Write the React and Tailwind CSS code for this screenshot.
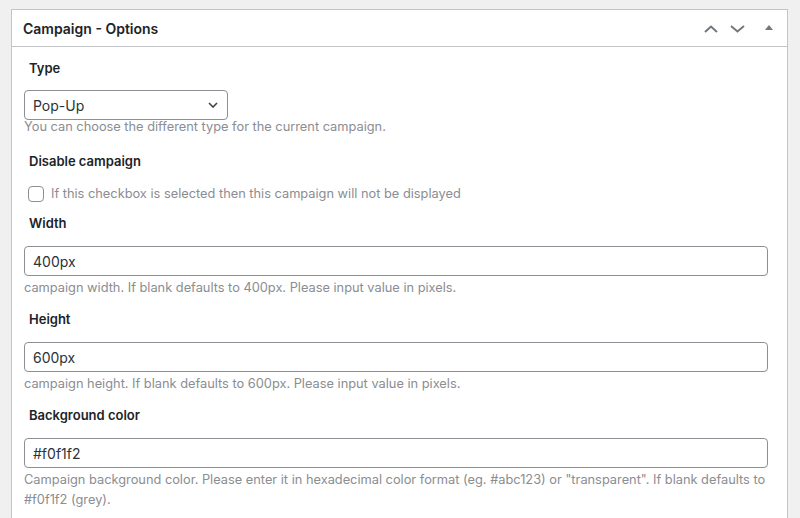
function Label({ children, className }) {
  return (
    <div className={"pl-[5px] text-[13px] leading-[18px] font-semibold text-[#1d2327] " + (className || "")}>
      {children}
    </div>
  );
}

function Desc({ children, className }) {
  return (
    <div className={"text-[12.8px] leading-[20px] text-[#8a8d92] " + (className || "")}>
      {children}
    </div>
  );
}

function TextInput({ value }) {
  return (
    <input
      readOnly
      defaultValue={value}
      className="mt-[14px] block w-full h-[30px] border border-[#8c8f94] rounded-[4px] pl-[8px] text-[14px] text-[#2c3338] bg-white outline-none"
    />
  );
}

export default function App() {
  return (
    <div className="w-[800px] h-[518px] overflow-hidden bg-[#f0f0f1] pt-[9px] pl-[11px] pr-[12px] font-['Inter',sans-serif]">
      <div className="h-full bg-white border border-b-0 border-[#c3c4c7]">
        <div className="h-[37px] border-b border-[#c3c4c7] flex items-center justify-between pl-[11px] pr-[14px]">
          <h2 className="text-[14px] font-semibold text-[#1d2327] leading-none pt-[1px]">Campaign - Options</h2>
          <div className="flex items-center">
            <svg width="14" height="8" viewBox="0 0 14 8" className="mt-[1px]">
              <polyline points="1,7 7,1.5 13,7" fill="none" stroke="#72777c" strokeWidth="2" />
            </svg>
            <svg width="15" height="8" viewBox="0 0 15 8" className="ml-[12px] mt-[1px]">
              <polyline points="1,1 7.5,6.5 14,1" fill="none" stroke="#72777c" strokeWidth="2" />
            </svg>
            <svg width="8" height="5" viewBox="0 0 8 5" className="ml-[20px] mb-[1px]">
              <polygon points="0,5 4,0 8,5" fill="#72777c" />
            </svg>
          </div>
        </div>

        <div className="pl-[12px] pr-[19px] pt-[12px]">
          <Label>Type</Label>
          <div className="mt-[13px] w-[204px] h-[30px] border border-[#8c8f94] rounded-[4px] flex items-center justify-between pl-[8px] pr-[9px] text-[14px] text-[#2c3338] bg-white">
            <span>Pop-Up</span>
            <svg width="10" height="6" viewBox="0 0 10 6">
              <polyline points="1,1 5,5 9,1" fill="none" stroke="#3c434a" strokeWidth="1.6" />
            </svg>
          </div>
          <Desc className="mt-[-3px]">You can choose the different type for the current campaign.</Desc>

          <Label className="mt-[15px]">Disable campaign</Label>
          <div className="mt-[16px] pl-[4px] flex items-center gap-[7px] h-[16px]">
            <div className="w-[16px] h-[16px] border border-[#8c8f94] rounded-[4px] bg-white" />
            <span className="text-[12.8px] leading-[16px] text-[#8a8d92]">
              If this checkbox is selected then this campaign will not be displayed
            </span>
          </div>

          <Label className="mt-[12px]">Width</Label>
          <TextInput value="400px" />
          <Desc className="mt-[2px]">campaign width. If blank defaults to 400px. Please input value in pixels.</Desc>

          <Label className="mt-[12px]">Height</Label>
          <TextInput value="600px" />
          <Desc className="mt-[2px]">campaign height. If blank defaults to 600px. Please input value in pixels.</Desc>

          <Label className="mt-[12px]">Background color</Label>
          <TextInput value="#f0f1f2" />
          <Desc className="mt-[2px]">
            <span className="whitespace-nowrap">Campaign background color. Please enter it in hexadecimal color format (eg. #abc123) or "transparent". If blank defaults to</span>
            <br />
            #f0f1f2 (grey).
          </Desc>
        </div>
      </div>
    </div>
  );
}
